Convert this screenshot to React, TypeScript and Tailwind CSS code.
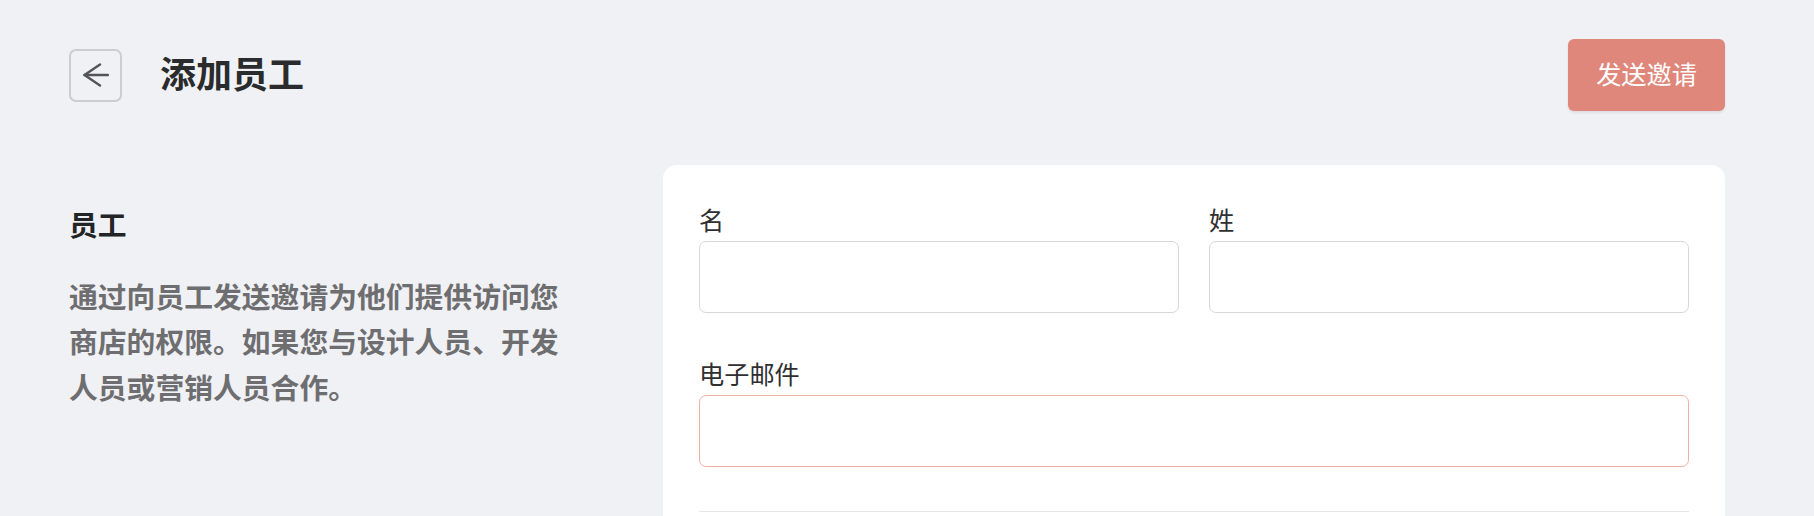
const font = '"Noto Sans", "Noto Sans CJK SC", sans-serif';

function BackArrow() {
  return (
    <svg width="26" height="24" viewBox="0 0 26 24" fill="none" stroke="#555558" strokeWidth="2.4" strokeLinecap="round" strokeLinejoin="round">
      <path d="M1.5 12H25" />
      <path d="M17 1.5 1.5 12 17 22.5" />
    </svg>
  );
}

function Field({ label, error }: { label: string; error?: boolean }) {
  return (
    <label className="flex flex-col">
      <span className="mb-[2px] text-[25.2px] leading-[38px] text-[#2f2f31]">{label}</span>
      <input
        type="text"
        className={
          error
            ? 'h-[72px] w-full rounded-[7px] border border-[#efb1a7] bg-white px-4 outline-none'
            : 'h-[72px] w-full rounded-[7px] border border-[#d7d7da] bg-white px-4 outline-none'
        }
      />
    </label>
  );
}

export default function App() {
  return (
    <div className="min-h-screen bg-[#f0f1f5] pl-[69px] pr-[89px] pt-[39px]" style={{ fontFamily: font }}>
      <header className="flex h-[72px] items-center justify-between">
        <div className="flex items-center gap-[38px]">
          <button className="flex h-[53px] w-[53px] items-center justify-center rounded-[7px] border-2 border-[#cdcdd1]">
            <BackArrow />
          </button>
          <h1 className="text-[36px] font-bold leading-none text-[#2a2b2d]">添加员工</h1>
        </div>
        <button className="h-[72px] w-[157px] rounded-[6px] bg-[#e0877c] text-[25.2px] text-white shadow-[0_2px_3px_rgba(0,0,0,0.08)]">
          发送邀请
        </button>
      </header>

      <main className="mt-[54px] flex">
        <section className="w-[594px] flex-none pt-[37px]">
          <h2 className="text-[28.8px] font-bold leading-[45.5px] text-[#232426]">员工</h2>
          <p className="mt-[26px] w-[500px] text-[28.8px] font-bold leading-[45.5px] text-[#6e6e70]">
            通过向员工发送邀请为他们提供访问您商店的权限。如果您与设计人员、开发人员或营销人员合作。
          </p>
        </section>

        <section className="flex-1 rounded-[14px] bg-white px-[36px] pt-[36px] pb-[60px]">
          <div className="grid grid-cols-2 gap-[30px]">
            <Field label="名" />
            <Field label="姓" />
          </div>
          <div className="mt-[42px]">
            <Field label="电子邮件" error />
          </div>
          <div className="mt-[44px] h-px bg-[#e6e6e8]" />
          <div className="h-[80px]" />
        </section>
      </main>
    </div>
  );
}
